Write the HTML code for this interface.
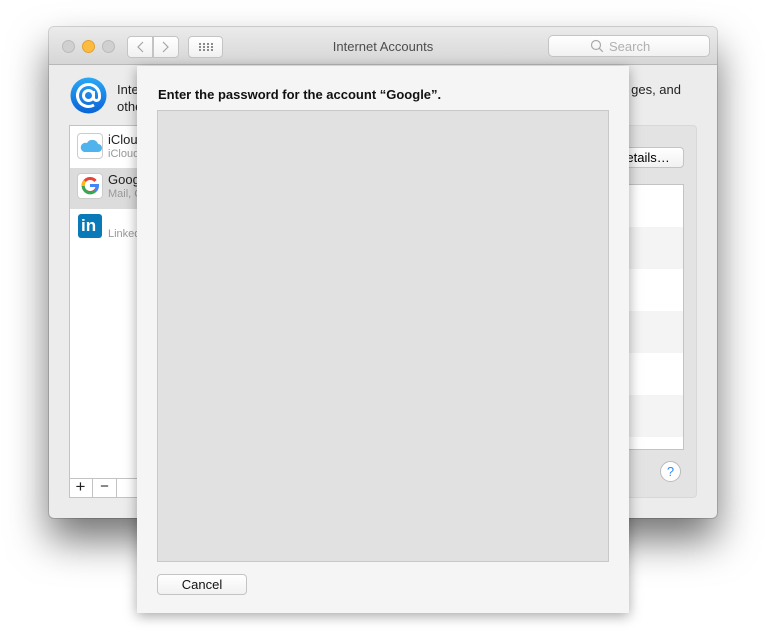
<!DOCTYPE html>
<html><head><meta charset="utf-8"><style>
*{margin:0;padding:0;box-sizing:border-box}
body{width:765px;height:632px;background:#fff;position:relative;overflow:hidden;font-family:"Liberation Sans",sans-serif}
.a{position:absolute}
.win{left:49px;top:27px;width:668px;height:491px;background:#ececec;border-radius:5px;box-shadow:0 22px 40px rgba(0,0,0,.55),0 0 0 1px rgba(0,0,0,.15)}
.tb{left:0;top:0;width:668px;height:38px;background:linear-gradient(#ebebeb,#d6d6d6);border-bottom:1px solid #b8b8b8;border-radius:5px 5px 0 0}
.dot{width:13px;height:13px;border-radius:50%;top:13px}
.btn{background:linear-gradient(#fff,#f1f1f1);border:1px solid #c4c4c4;border-radius:4px}
.sheet{left:137px;top:66px;width:492px;height:547px;background:#f5f5f5;box-shadow:0 3px 12px rgba(0,0,0,.35)}
.txt{font-size:13px;color:#222}
</style></head><body>
<div class="a win">
 <div class="a tb">
  <div class="a dot" style="left:13px;background:#d0d0d0;border:1px solid #bbb"></div>
  <div class="a dot" style="left:33px;background:#fdbb40;border:1px solid #e1a030"></div>
  <div class="a dot" style="left:53px;background:#d0d0d0;border:1px solid #bbb"></div>
  <div class="a btn" style="left:78px;top:9px;width:26px;height:22px;border-radius:4px 0 0 4px"></div>
  <div class="a btn" style="left:104px;top:9px;width:26px;height:22px;border-radius:0 4px 4px 0"></div>
  <svg class="a" style="left:78px;top:9px" width="52" height="22"><path d="M16 6l-5 5 5 5M36 6l5 5-5 5" stroke="#a5a5a5" stroke-width="1.2" fill="none"/></svg>
  <div class="a btn" style="left:139px;top:9px;width:35px;height:22px"></div>
  <svg class="a" style="left:139px;top:9px" width="35" height="22"><g fill="#8a8a8a"><rect x="11" y="7" width="2" height="2"/><rect x="15" y="7" width="2" height="2"/><rect x="19" y="7" width="2" height="2"/><rect x="23" y="7" width="2" height="2"/><rect x="11" y="10" width="2" height="2"/><rect x="15" y="10" width="2" height="2"/><rect x="19" y="10" width="2" height="2"/><rect x="23" y="10" width="2" height="2"/><rect x="11" y="13" width="2" height="2"/><rect x="15" y="13" width="2" height="2"/><rect x="19" y="13" width="2" height="2"/><rect x="23" y="13" width="2" height="2"/></g></svg>
  <div class="a" style="left:0;width:668px;top:12px;text-align:center;font-size:13px;color:#4d4d4d">Internet Accounts</div>
  <div class="a btn" style="left:499px;top:8px;width:162px;height:22px;border-radius:5px"></div>
  <svg class="a" style="left:541px;top:12px" width="14" height="14"><circle cx="6" cy="6" r="4.5" stroke="#aaa" stroke-width="1.2" fill="none"/><path d="M9.3 9.3l3.5 3.5" stroke="#aaa" stroke-width="1.3"/></svg>
  <div class="a" style="left:560px;top:12px;font-size:13px;color:#b0b0b0">Search</div>
 </div>
 <svg class="a" style="left:21px;top:50px" width="37" height="37"><defs><linearGradient id="g" x1="0" y1="0" x2="0" y2="1"><stop offset="0" stop-color="#2aa8f6"/><stop offset="1" stop-color="#0a63d6"/></linearGradient></defs><circle cx="18.5" cy="18.5" r="18" fill="url(#g)"/><circle cx="18.5" cy="18.5" r="5" stroke="#fff" stroke-width="3" fill="none"/><path d="M23.5 14v6.5a3 3 0 0 0 6 0v-2A11 11 0 1 0 24 28" stroke="#fff" stroke-width="3" fill="none"/></svg>
 <div class="a txt" style="left:68px;top:54px;line-height:17px">Internet Accounts sets up your accounts to use with Mail, Contacts, Calendar, Messages, and<br>other apps.</div>
 <div class="a txt" style="left:560px;top:53px;width:72px;height:18px;background:#ececec;text-align:right;line-height:17px;padding-top:1px">ges, and</div>
 <div class="a" style="left:20px;top:98px;width:200px;height:373px;background:#fff;border:1px solid #c3c3c3"></div>
 <div class="a" style="left:21px;top:141px;width:200px;height:41px;background:#dcdcdc"></div>
 <div class="a" style="left:28px;top:106px;width:26px;height:26px;background:#fff;border:1px solid #ccc;border-radius:4px"></div>
 <svg class="a" style="left:31px;top:111px" width="22" height="16"><path d="M4 14h14a4 4 0 0 0 0-8 6 6 0 0 0-11-1A4.5 4.5 0 0 0 4 14z" fill="#4fb3ee"/></svg>
 <div class="a txt" style="left:59px;top:105px">iCloud</div>
 <div class="a" style="left:59px;top:121px;font-size:11px;color:#999">iCloud</div>
 <div class="a" style="left:28px;top:146px;width:26px;height:26px;background:#fff;border:1px solid #ccc;border-radius:4px"></div>
 <svg class="a" style="left:32px;top:150px" width="18" height="18"><path d="M14.5 4A7 7 0 1 0 16 9.8" stroke="#ea4335" stroke-width="3" fill="none"/><path d="M2.2 9A7 7 0 0 0 14 14" stroke="#34a853" stroke-width="3" fill="none"/><path d="M2.2 9A7 7 0 0 1 4 4" stroke="#fbbc05" stroke-width="3" fill="none"/><path d="M9 8.5h7.5A7 7 0 0 1 14 14" stroke="#4285f4" stroke-width="3" fill="none"/></svg>
 <div class="a txt" style="left:59px;top:145px">Google</div>
 <div class="a" style="left:59px;top:161px;font-size:11px;color:#999">Mail, Contacts</div>
 <div class="a" style="left:29px;top:187px;width:24px;height:24px;background:#0a79b7;border-radius:3px;color:#fff;font-weight:bold;font-size:17px;padding-left:3px;line-height:24px">in</div>
 <div class="a" style="left:59px;top:201px;font-size:11px;color:#999">LinkedIn</div>
 <div class="a" style="left:20px;top:451px;width:200px;height:20px;border:1px solid #c3c3c3;background:#fff"></div>
 <div class="a" style="left:20px;top:451px;width:24px;height:20px;border-right:1px solid #c3c3c3;text-align:center;font-size:17px;line-height:18px;color:#222">+</div>
 <div class="a" style="left:44px;top:451px;width:24px;height:20px;border-right:1px solid #c3c3c3;text-align:center;font-size:15px;line-height:18px;color:#222">−</div>
 <div class="a" style="left:240px;top:98px;width:408px;height:373px;background:#e3e3e3;border:1px solid #d8d8d8;border-radius:4px"></div>
 <div class="a btn" style="left:555px;top:120px;width:80px;height:21px;font-size:13px;padding-left:12px;line-height:19px">Details…</div>
 <div class="a" style="left:260px;top:157px;width:375px;height:266px;border:1px solid #c3c3c3;background:repeating-linear-gradient(#fff 0 42px,#f4f4f4 42px 84px)"></div>
 <div class="a" style="left:611px;top:434px;width:21px;height:21px;border-radius:50%;background:#fff;border:1px solid #bbb;color:#2d8cf0;font-size:13px;text-align:center;line-height:19px">?</div>
</div>
<div class="a sheet">
 <div class="a" style="left:21px;top:21px;font-size:13px;font-weight:bold;color:#111">Enter the password for the account “Google”.</div>
 <div class="a" style="left:20px;top:44px;width:452px;height:452px;background:#e1e1e1;border:1px solid #c8c8c8"></div>
 <div class="a btn" style="left:20px;top:508px;width:90px;height:21px;font-size:13px;text-align:center;line-height:19px;color:#111">Cancel</div>
</div>
</body></html>
